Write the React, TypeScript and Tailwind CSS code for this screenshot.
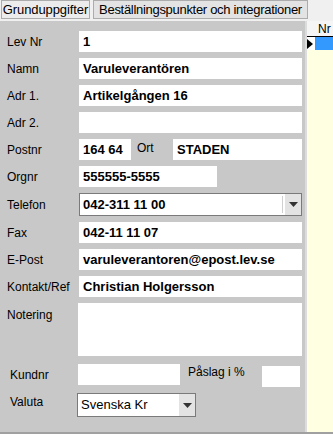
import React from "react";

const font = { fontFamily: '"Liberation Sans", Arial, sans-serif' };

const Label = ({ children, className = "" }: { children: React.ReactNode; className?: string }) => (
  <span className={`text-[12px] text-black ${className}`}>{children}</span>
);

const Field = ({ value, className = "" }: { value?: string; className?: string }) => (
  <div className={`h-[21px] bg-white flex items-center pl-[4px] text-[13px] font-bold text-black ${className}`}>
    {value}
  </div>
);

const Caret = () => (
  <svg width="9" height="5" viewBox="0 0 9 5">
    <path d="M0 0h9L4.5 5z" fill="#333" />
  </svg>
);

export default function App() {
  return (
    <div className="w-[333px] h-[434px] flex flex-col bg-[#f0f0f0] overflow-hidden" style={font}>
      {/* TABS */}
      <div className="h-[21px] flex items-start gap-[3px] pl-[1px] bg-[#f0f0f0]">
        <div className="h-[19px] w-[89px] border border-[#acacac] bg-[#ececec] flex items-center justify-center text-[13px] text-black whitespace-nowrap tracking-[-0.1px]">
          Grunduppgifter
        </div>
        <div className="h-[19px] w-[215px] border border-[#acacac] bg-[#e3e3e3] flex items-center justify-center text-[13px] text-black whitespace-nowrap tracking-[-0.3px]">
          Beställningspunkter och integrationer
        </div>
      </div>

      <div className="flex flex-1 min-h-0">
        {/* FORM */}
        <div className="w-[305px] bg-[#c8c8c8] pt-[10px] pr-[3px] flex flex-col gap-[6px]">
          <div className="flex items-center pl-[7px]">
            <Label className="w-[72px]">Lev Nr</Label>
            <Field value="1" className="flex-1" />
          </div>
          <div className="flex items-center pl-[7px]">
            <Label className="w-[72px]">Namn</Label>
            <Field value="Varuleverantören" className="flex-1" />
          </div>
          <div className="flex items-center pl-[7px]">
            <Label className="w-[72px]">Adr 1.</Label>
            <Field value="Artikelgången 16" className="flex-1" />
          </div>
          <div className="flex items-center pl-[7px]">
            <Label className="w-[72px]">Adr 2.</Label>
            <Field className="flex-1" />
          </div>
          <div className="flex items-center pl-[7px]">
            <Label className="w-[72px]">Postnr</Label>
            <Field value="164 64" className="w-[52px]" />
            <Label className="ml-[6px] w-[36px] -mt-[3px]">Ort</Label>
            <Field value="STADEN" className="flex-1" />
          </div>
          <div className="flex items-center pl-[7px]">
            <Label className="w-[72px]">Orgnr</Label>
            <Field value="555555-5555" className="w-[138px]" />
          </div>
          <div className="flex items-center pl-[7px]">
            <Label className="w-[72px]">Telefon</Label>
            <div className="flex-1 h-[23px] bg-white border border-[#7a7a7a] flex items-center">
              <span className="flex-1 pl-[3px] text-[13px] font-bold text-black">042-311 11 00</span>
              <div className="w-[1px] h-[17px] bg-[#d0d0d0] mr-[2px]" />
              <div className="w-[16px] h-full bg-[#e3e3e3] flex items-center justify-center">
                <Caret />
              </div>
            </div>
          </div>
          <div className="flex items-center pl-[7px]">
            <Label className="w-[72px]">Fax</Label>
            <Field value="042-11 11 07" className="flex-1" />
          </div>
          <div className="flex items-center pl-[7px]">
            <Label className="w-[72px]">E-Post</Label>
            <Field value="varuleverantoren@epost.lev.se" className="flex-1" />
          </div>
          <div className="flex items-center pl-[7px]">
            <Label className="w-[72px]">Kontakt/Ref</Label>
            <Field value="Christian Holgersson" className="flex-1" />
          </div>
          <div className="flex items-start pl-[7px]">
            <Label className="w-[71px] pt-[3px]">Notering</Label>
            <div className="flex-1 h-[53px] bg-white" />
          </div>
          <div className="flex items-center pl-[10px]">
            <Label className="w-[68px]">Kundnr</Label>
            <div className="w-[102px] h-[21px] bg-white" />
            <Label className="ml-[8px] w-[74px] -mt-[6px]">Påslag i %</Label>
            <div className="w-[38px] h-[21px] bg-white mt-[4px]" />
          </div>
          <div className="flex items-center pl-[10px]">
            <Label className="w-[67px] -mt-[6px]">Valuta</Label>
            <div className="w-[119px] h-[24px] bg-white border border-[#7a7a7a] flex items-center">
              <span className="flex-1 pl-[3px] text-[13px] text-black">Svenska Kr</span>
              <div className="w-[16px] h-full bg-[#e3e3e3] flex items-center justify-center">
                <Caret />
              </div>
            </div>
          </div>
        </div>

        {/* GRID */}
        <div className="flex-1 bg-[#ffffe1] border-l-[2px] border-[#dcdcdc] flex flex-col">
          <div className="h-[15px] bg-[#f5f5f5] flex items-center pl-[11px] text-[12px] text-black">Nr</div>
          <div className="h-[14px] flex border-t border-black">
            <div className="w-[8px] bg-white flex items-center">
              <svg width="6" height="10" viewBox="0 0 6 10">
                <path d="M0 0l6 5-6 5z" fill="#000" />
              </svg>
            </div>
            <div className="flex-1 bg-[#3399ff]" />
          </div>
        </div>
      </div>
      <div className="h-[2px] bg-[#a0a0a0]" />
    </div>
  );
}
